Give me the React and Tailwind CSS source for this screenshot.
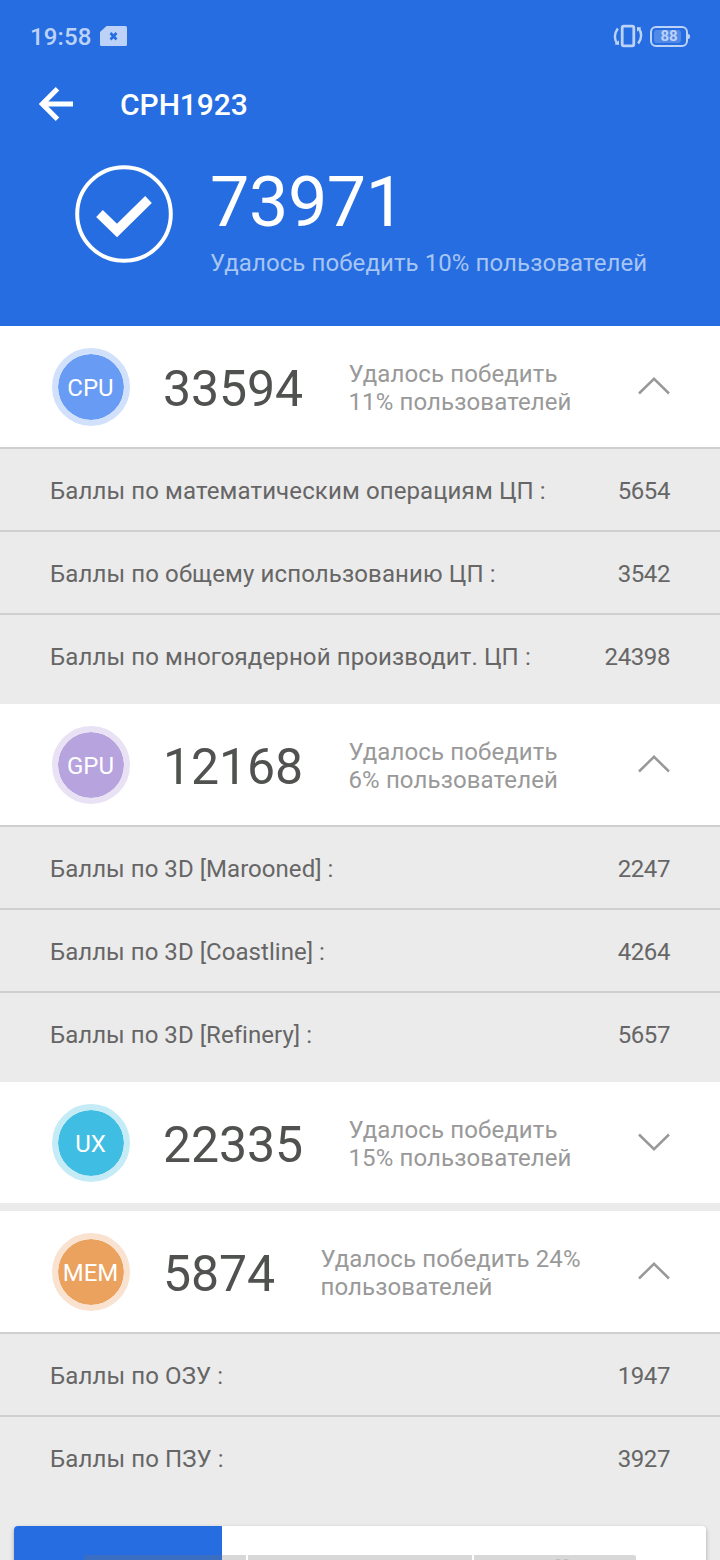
import React, { useState } from 'react';
import clsx from 'clsx';

const SECTIONS = [
  {
    id: 'CPU',
    score: 33594,
    note: ['Удалось победить', '11% пользователей'],
    open: true,
    badge: 'bg-[#689bf4] border-[#d1e0fb]',
    labelClass: 'tracking-[0.12px]',
    rows: [
      ['Баллы по математическим операциям ЦП :', 5654],
      ['Баллы по общему использованию ЦП :', 3542],
      ['Баллы по многоядерной производит. ЦП :', 24398]
    ]
  },
  {
    id: 'GPU',
    score: 12168,
    note: ['Удалось победить', '6% пользователей'],
    open: true,
    badge: 'bg-[#b7a3de] border-[#e9e2f5]',
    labelClass: 'tracking-[0.04px]',
    rows: [
      ['Баллы по 3D [Marooned] :', 2247],
      ['Баллы по 3D [Coastline] :', 4264],
      ['Баллы по 3D [Refinery] :', 5657]
    ]
  },
  {
    id: 'UX',
    score: 22335,
    note: ['Удалось победить', '15% пользователей'],
    open: false,
    badge: 'bg-[#3fbde2] border-[#c5ebf6]',
    rows: []
  },
  {
    id: 'MEM',
    score: 5874,
    note: ['Удалось победить 24%', 'пользователей'],
    open: true,
    badge: 'bg-[#eaa25e] border-[#f9e2cf]',
    labelClass: 'tracking-[0.12px]',
    rows: [
      ['Баллы по ОЗУ :', 1947],
      ['Баллы по ПЗУ :', 3927]
    ]
  }
];

const StatusBar = () => (
  <div className="flex h-[72px] items-center pl-[30px] pr-[32px] text-[#bdd2f7]">
    <span className="pt-[2px] text-[24px] font-medium leading-none tracking-[0.1px]">19:58</span>
    <svg className="ml-[9px]" width="27" height="20" viewBox="0 0 27 20">
      <path d="M6.5 0H25.5Q27 0 27 1.5V18.5Q27 20 25.5 20H1.5Q0 20 0 18.5V6Z" fill="currentColor" />
      <path d="M10.5 7L16.5 13.5M16.5 7L10.5 13.5" stroke="#256de0" strokeWidth="2.6" />
    </svg>
    <div className="ml-auto flex items-center">
      <svg width="30" height="24" viewBox="0 0 30 24" fill="none" stroke="currentColor">
        <rect x="9.2" y="2.2" width="11.6" height="19.6" rx="1.5" strokeWidth="2.8" />
        <path d="M4.8 4.5Q-0.6 12 4 19.5M25.2 19.5Q30.6 12 26 4.5" strokeWidth="2.4" />
        <path d="M1.5 20.5L6 21V16.2ZM28.5 3.5L24 3V7.8Z" fill="currentColor" stroke="none" />
      </svg>
      <div className="relative ml-[7px] flex h-[21px] w-[38px] items-center justify-center rounded-[6px] border-2 border-current">
        <span className="absolute inset-y-[2px] left-[2px] w-[27px] rounded-[3px] bg-[#5089e8]" />
        <span className="relative pt-px text-[15px] font-bold leading-none">88</span>
        <span className="absolute -right-[4px] top-[6px] h-[5px] w-[2px] rounded-r bg-current" />
      </div>
    </div>
  </div>
);

const Header = () => (
  <header className="h-[326px] bg-[#256de0]">
    <StatusBar />
    <div className="flex h-[64px] items-center pl-[39px] text-white">
      <svg width="34" height="34" viewBox="0 0 34 34" fill="none" stroke="currentColor" strokeWidth="5">
        <path d="M34 17H4M18.5 1.8L3.3 17L18.5 32.2" />
      </svg>
      <h1 className="ml-[47px] pt-[2px] text-[30px] font-medium leading-none tracking-[-0.05px]">CPH1923</h1>
    </div>
    <div className="flex pl-[74.5px] pt-[29px]">
      <svg width="98" height="98" viewBox="0 0 98 98" fill="none" stroke="#fff">
        <circle cx="49" cy="49" r="46.8" strokeWidth="4" />
        <path d="M24.5 48.5L42 65.5L73.5 34.5" strokeWidth="9.5" />
      </svg>
      <div className="ml-[37.5px]">
        <div className="pt-px text-[70px] leading-[72px] tracking-[-0.4px] text-white">73971</div>
        <div className="mt-[11px] text-[24px] leading-[28px] tracking-[0.09px] text-[#a8c5f3]">
          Удалось победить 10% пользователей
        </div>
      </div>
    </div>
  </header>
);

const Chevron = ({ open }) => (
  <svg
    className={clsx('relative -top-px ml-auto', !open && 'rotate-180')}
    width="32"
    height="18"
    viewBox="0 0 32 18"
    fill="none"
    stroke="#999"
    strokeWidth="2.5"
  >
    <path d="M1 16.5L16 1.8L31 16.5" />
  </svg>
);

const Section = ({ section }) => {
  const [open, setOpen] = useState(section.open);

  return (
    <section className="mb-2">
      <button
        type="button"
        onClick={() => setOpen(!open)}
        className="flex h-[121px] w-full items-center bg-white pl-[51.5px] pr-[50.5px] text-left"
      >
        <span
          className={clsx(
            'flex size-[78px] items-center justify-center rounded-full border-6 bg-clip-padding pt-[2px] text-[24px] text-white',
            section.badge
          )}
        >
          {section.id}
        </span>
        <span className="ml-[33.5px] mt-[5px] text-[50px] leading-none tracking-[-0.1px] text-[#50524f]">
          {section.score}
        </span>
        <span className="ml-[45.5px] mt-[2px] text-[24px] leading-[28px] tracking-[0.12px] text-[#999]">
          {section.note.map((line) => (
            <span key={line} className="block whitespace-nowrap">
              {line}
            </span>
          ))}
        </span>
        <Chevron open={open} />
      </button>
      {open &&
        section.rows.map(([label, value]) => (
          <div
            key={label}
            className="flex h-[83px] items-center justify-between border-t-2 border-[#cfcfcf] px-[50px] pt-[2px] text-[24px] text-[#666]"
          >
            <span className={section.labelClass}>{label}</span>
            <span className="tracking-[-0.4px]">{value}</span>
          </div>
        ))}
    </section>
  );
};

// Bottom card is cut off by the screen edge
const BottomCard = () => (
  <div className="mx-[14px] mt-[28px] flex h-[60px] overflow-hidden rounded-[4px] bg-white shadow-[0_2px_4px_rgba(0,0,0,0.3)]">
    <div className="flex w-[208px] items-start bg-[#256de0] pl-[70px] pt-[29px]">
      <div className="h-[31px] w-full bg-[#3b6dc0]" />
    </div>
    <div className="flex gap-[2px] pt-[29px]">
      <div className="w-[24px] bg-[#d8d8d8]" />
      <div className="w-[224px] bg-[#d8d8d8]" />
      <div className="flex w-[162px] justify-center rounded-tr-[2px] bg-[#d8d8d8] pl-[14px] pt-[4px]">
        <svg width="16" height="8" viewBox="0 0 16 8" fill="#bdbdbd">
          <circle cx="4" cy="4" r="4" />
          <circle cx="12" cy="4" r="4" />
        </svg>
      </div>
    </div>
  </div>
);

export default function App() {
  return (
    <div className="h-[1560px] w-[720px] overflow-hidden bg-[#ebebeb] font-[Roboto,sans-serif]">
      <Header />
      {SECTIONS.map((section) => (
        <Section key={section.id} section={section} />
      ))}
      <BottomCard />
    </div>
  );
}
